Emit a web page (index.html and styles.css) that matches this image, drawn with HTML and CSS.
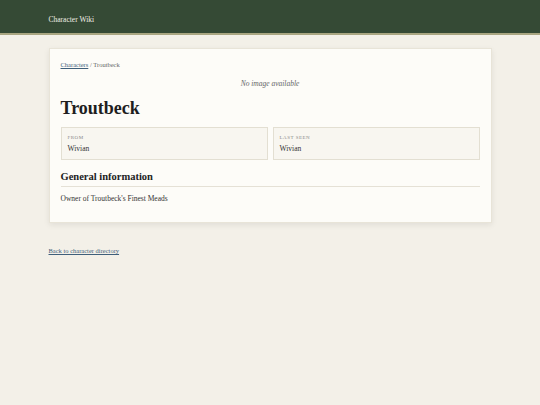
FILE: index.html
```html
<!DOCTYPE html>
<html>
<head>
<meta charset="utf-8">
<link rel="stylesheet" href="styles.css">
</head>
<body>
<header class="topbar">
  <div class="wrap"><span class="brand">Character Wiki</span></div>
</header>
<main class="wrap main">
  <article class="card">
    <nav class="crumbs"><a href="#">Characters</a> / Troutbeck</nav>
    <div class="noimg">No image available</div>
    <h1 class="title">Troutbeck</h1>
    <div class="facts">
      <div class="fact"><div class="label">From</div><div class="value">Wivian</div></div>
      <div class="fact"><div class="label">Last seen</div><div class="value">Wivian</div></div>
    </div>
    <h2 class="section">General information</h2>
    <p class="text">Owner of Troutbeck's Finest Meads</p>
  </article>
  <a class="back" href="#">Back to character directory</a>
</main>
</body>
</html>
```
FILE: styles.css
```css
html, body { margin: 0; padding: 0; }
body {
  background: #f3f0e8;
  font-family: "Liberation Serif", "Times New Roman", serif;
  color: #222;
}
.wrap { width: 443px; margin: 0 auto; }
.topbar {
  background: #354a35;
  height: 33px;
  border-bottom: 2px solid #a9a681;
  display: flex;
  align-items: center;
}
.brand { color: #f1efe6; font-size: 7.5px; }
.main { padding-top: 13px; }
.card {
  background: #fdfcf8;
  border: 1px solid #e8e4d8;
  box-shadow: 0 2px 6px rgba(0,0,0,0.08);
  padding: 12px 11px 19px 11px;
}
.crumbs { font-size: 6.5px; line-height: 8px; color: #666; }
.crumbs a { color: #3f5f7a; }
.noimg { text-align: center; font-style: italic; font-size: 7.5px; line-height: 9px; color: #666; margin-top: 10px; }
.title { font-size: 18px; line-height: 22px; font-weight: bold; margin: 9px 0 8px; color: #1e1e1e; }
.facts { display: grid; grid-template-columns: 1fr 1fr; gap: 5px; }
.fact { background: #f8f6f0; border: 1px solid #e3dfd2; padding: 6px 6px 6px 6px; }
.label { font-size: 5px; line-height: 7px; text-transform: uppercase; letter-spacing: 0.5px; color: #888; }
.value { font-size: 7.5px; line-height: 9px; margin-top: 3px; color: #333; }
.section { font-size: 10.5px; line-height: 13px; font-weight: bold; margin: 10px 0 0; padding-bottom: 3px; border-bottom: 1px solid #e5e1d6; }
.text { font-size: 7.5px; line-height: 9px; margin: 7px 0 0; color: #333; }
.back { display: inline-block; margin-top: 24px; font-size: 6.5px; color: #3f5f7a; }
```
